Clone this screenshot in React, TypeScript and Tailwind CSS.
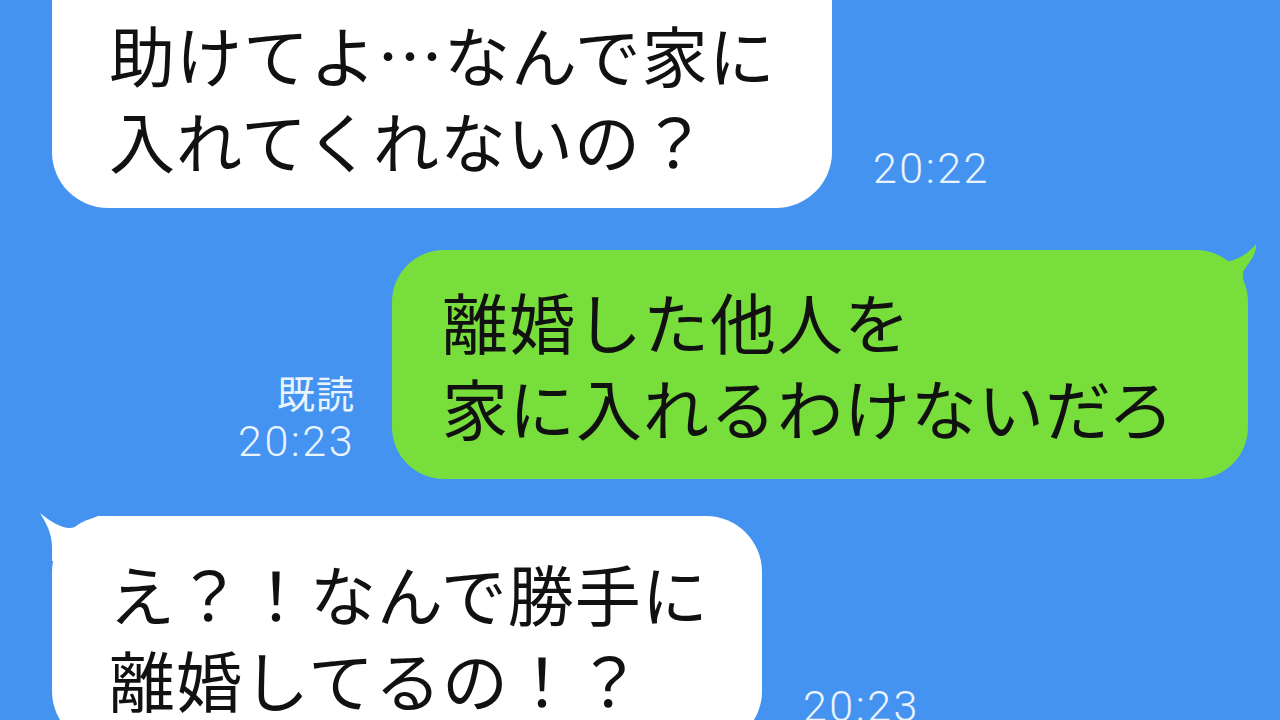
const jp = "font-['Noto_Sans_CJK_JP','Noto_Sans_CJK_SC',sans-serif]";
const time = "font-['Roboto','Liberation_Sans',sans-serif] font-light text-[43px] leading-[43px] tracking-[2.5px] text-[#eaf4ff] whitespace-nowrap";

function LeftTail() {
  return (
    <svg className="absolute left-[-16px] top-[-7px]" width="74" height="52" viewBox="0 0 74 52">
      <path
        d="M4 4 C14 12 24 19 34 19 C44 19 52 10 62 7 L74 7 L74 52 L16 52 L16 38 C16 24 10 14 4 4 Z"
        fill="#ffffff"
      />
    </svg>
  );
}

function RightTail() {
  return (
    <svg className="absolute right-[-12px] top-[-10px]" width="80" height="70" viewBox="0 0 80 70">
      <path
        d="M0 10 L5 10 C20 10 30 22 42 22 C55 22 68 14 76 4 C77 14 69 22 63 32 C62 45 68 55 68 70 L0 70 Z"
        fill="#78de3c"
      />
    </svg>
  );
}

function Line({ children }: { children: string }) {
  return <div className="whitespace-nowrap">{children}</div>;
}

export default function App() {
  return (
    <div className="h-[720px] w-[1280px] overflow-hidden bg-[#4493f0]">
      <div className="mt-[-60px] flex items-end pl-[52px]">
        <div className={`relative w-[780px] rounded-[56px] bg-white pb-[26px] pl-[57px] pt-[70px] text-[66px] leading-[86px] tracking-[1px] text-[#111] ${jp}`}>
          <LeftTail />
          <div className="relative">
            <Line>助けてよ…なんで家に</Line>
            <Line>入れてくれないの？</Line>
          </div>
        </div>
        <div className={`mb-[18px] ml-[41px] ${time}`}>20:22</div>
      </div>

      <div className="mt-[42px] flex items-end justify-end pr-[32px]">
        <div className="mb-[16px] mr-[37px] flex flex-col items-end">
          <div className={`text-[38px] leading-[38px] tracking-[1px] text-[#eaf4ff] ${jp}`}>既読</div>
          <div className={`mt-[9px] ${time}`}>20:23</div>
        </div>
        <div className={`relative w-[856px] rounded-[52px] bg-[#78de3c] pb-[30px] pl-[50px] pt-[27px] text-[66px] leading-[86px] tracking-[1px] text-[#111] ${jp}`}>
          <RightTail />
          <div className="relative">
            <Line>離婚した他人を</Line>
            <Line>家に入れるわけないだろ</Line>
          </div>
        </div>
      </div>

      <div className="mt-[37px] flex items-end pl-[52px]">
        <div className={`relative w-[710px] rounded-[56px] bg-white pb-[26px] pl-[57px] pt-[33px] text-[66px] leading-[86px] tracking-[1px] text-[#111] ${jp}`}>
          <LeftTail />
          <div className="relative">
            <Line>え？！なんで勝手に</Line>
            <Line>離婚してるの！？</Line>
          </div>
        </div>
        <div className={`mb-[19px] ml-[41px] ${time}`}>20:23</div>
      </div>
    </div>
  );
}
